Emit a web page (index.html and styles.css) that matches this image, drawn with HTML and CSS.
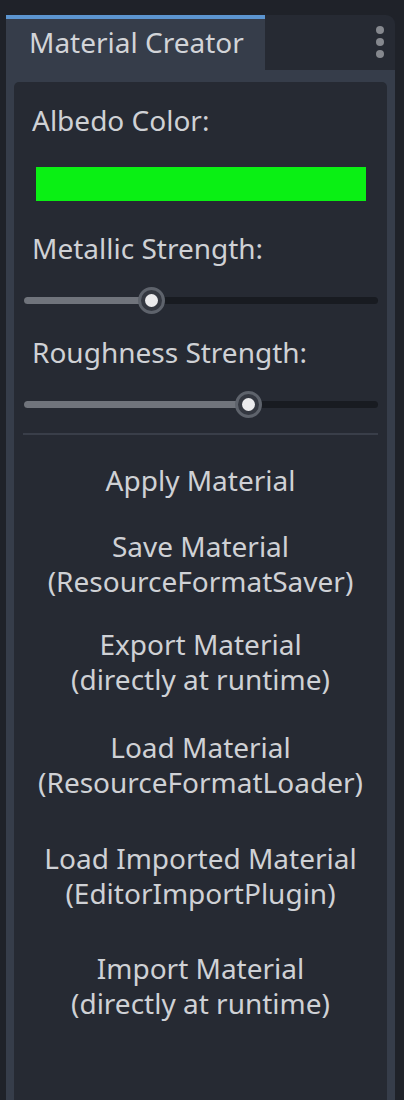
FILE: index.html
```html
<!DOCTYPE html>
<html>
<head>
<meta charset="utf-8">
<link rel="stylesheet" href="styles.css">
</head>
<body>
<div class="dock">
  <div class="tabbar">
    <div class="tab">Material Creator</div>
    <div class="tabfill">
      <div class="kebab"><span></span><span></span><span></span></div>
    </div>
  </div>
  <div class="frame">
    <div class="panel">
      <div class="label l-albedo">Albedo Color:</div>
      <div class="swatch"></div>
      <div class="label l-metal">Metallic Strength:</div>
      <div class="slider">
        <div class="track"><div class="fill" style="width:36.1%"></div></div>
        <div class="knob" style="left:36.1%"></div>
      </div>
      <div class="label l-rough">Roughness Strength:</div>
      <div class="slider">
        <div class="track"><div class="fill" style="width:63.5%"></div></div>
        <div class="knob" style="left:63.5%"></div>
      </div>
      <div class="sep"></div>
      <div class="btn b1">Apply Material</div>
      <div class="btn b2">Save Material<br>(ResourceFormatSaver)</div>
      <div class="btn b3">Export Material<br>(directly at runtime)</div>
      <div class="btn b4">Load Material<br>(ResourceFormatLoader)</div>
      <div class="btn b5">Load Imported Material<br>(EditorImportPlugin)</div>
      <div class="btn b6">Import Material<br>(directly at runtime)</div>
    </div>
  </div>
</div>
</body>
</html>
```

FILE: styles.css
```css
html, body {
  margin: 0;
  padding: 0;
  background: #1f2229;
  height: 1100px;
  overflow: hidden;
}
body {
  font-family: "Noto Sans", "Open Sans", sans-serif;
  font-size: 28px;
  line-height: 35px;
  color: #cfd1d5;
}
.dock {
  padding-top: 15px;
  margin-left: 6px;
  width: 389px;
  display: flex;
  flex-direction: column;
  height: 1085px;
}
.tabbar {
  display: flex;
  height: 55px;
  flex: none;
}
.tab {
  width: 259px;
  box-sizing: border-box;
  background: #363d4a;
  border-top: 4px solid #5c95d0;
  padding: 6px 0 0 23px;
  color: #d2d4d8;
}
.tabfill {
  flex: 1;
  background: #262a33;
  border-top-right-radius: 9px;
  position: relative;
}
.kebab {
  position: absolute;
  right: 11px;
  top: 11px;
  display: flex;
  flex-direction: column;
  gap: 4px;
}
.kebab span {
  width: 8px;
  height: 8px;
  border-radius: 50%;
  background: #85888e;
}
.frame {
  flex: 1;
  background: #363d4a;
  padding: 12px 8px 0 8px;
  display: flex;
}
.panel {
  flex: 1;
  background: #262a33;
  border-radius: 5px 5px 0 0;
  padding: 0 9px;
  display: flex;
  flex-direction: column;
}
.label {
  padding-left: 9px;
}
.l-albedo { margin-top: 21px; }
.swatch {
  margin: 29px 12px 0 13px;
  height: 34px;
  background: #0af014;
}
.l-metal { margin-top: 30px; }
.l-rough { margin-top: 21px; }
.slider {
  position: relative;
  height: 28px;
  margin: 20px 0 0 1px;
  display: flex;
  align-items: center;
}
.track {
  flex: 1;
  height: 7px;
  border-radius: 4px;
  background: #181b21;
  overflow: hidden;
}
.fill {
  height: 100%;
  background: #70747c;
}
.knob {
  position: absolute;
  top: 50%;
  width: 27px;
  height: 27px;
  margin: -13.5px 0 0 -13.5px;
  box-sizing: border-box;
  border-radius: 50%;
  border: 3px solid #5e636c;
  background: #343841;
  display: flex;
  align-items: center;
  justify-content: center;
}
.knob::after {
  content: "";
  width: 13px;
  height: 13px;
  border-radius: 50%;
  background: #ebebed;
}
.sep {
  height: 2px;
  background: #393e49;
  margin-top: 15px;
}
.btn {
  text-align: center;
  color: #cfd1d5;
}
.b1 { margin-top: 28px; }
.b2 { margin-top: 31px; }
.b3 { margin-top: 28px; }
.b4 { margin-top: 33px; }
.b5 { margin-top: 41px; }
.b6 { margin-top: 40px; }
```
